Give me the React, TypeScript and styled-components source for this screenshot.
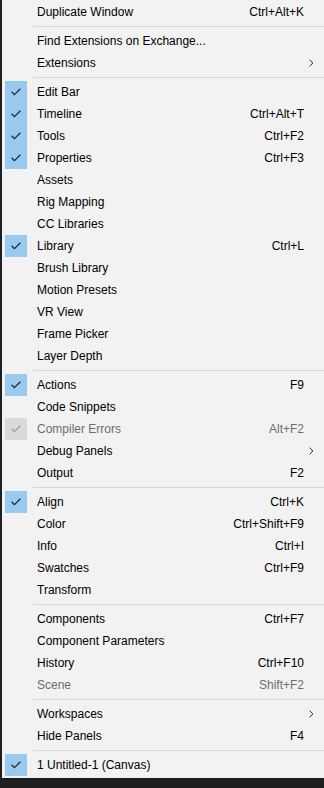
import React from 'react';
import styled, { createGlobalStyle } from 'styled-components';

const GlobalStyle = createGlobalStyle`
  html, body {
    margin: 0;
    padding: 0;
    background: #1f1f1f;
  }
  body {
    font-family: "Liberation Sans", Arial, sans-serif;
  }
`

const MenuWrapper = styled.div`
  margin-left: 2px;
  width: 322px;
  height: 778px;
  box-sizing: border-box;
  padding: 1px 0 3px 0;
  background: #f2f2f2;
  font-size: 12px;
  color: #000;
`

const MenuRow = styled.div<{ $disabled?: boolean }>`
  display: flex;
  align-items: center;
  height: 22px;
  padding-left: 3px;
  color: ${p => (p.$disabled ? '#6d6d6d' : '#000')};
`

const CheckCell = styled.div<{ $checked?: boolean; $disabled?: boolean }>`
  width: 22px;
  height: 22px;
  display: flex;
  align-items: center;
  justify-content: center;
  background: ${p => (!p.$checked ? 'transparent' : p.$disabled ? '#dadada' : '#99c9ef')};
`

const Label = styled.span`
  margin-left: 10px;
  white-space: nowrap;
`

const Shortcut = styled.span`
  margin-left: auto;
  white-space: nowrap;
`

const Trailing = styled.div`
  width: 20px;
  height: 22px;
  display: flex;
  align-items: center;
  padding-left: 5px;
  box-sizing: border-box;
`

const Separator = styled.div`
  height: 1px;
  margin: 3px 0 3px 31px;
  background: #d7d7d7;
`

type Entry =
  | { sep: true }
  | { label: string; shortcut?: string; checked?: boolean; disabled?: boolean; sub?: boolean };

const items: Entry[] = [
  { label: 'Duplicate Window', shortcut: 'Ctrl+Alt+K' },
  { sep: true },
  { label: 'Find Extensions on Exchange...' },
  { label: 'Extensions', sub: true },
  { sep: true },
  { label: 'Edit Bar', checked: true },
  { label: 'Timeline', shortcut: 'Ctrl+Alt+T', checked: true },
  { label: 'Tools', shortcut: 'Ctrl+F2', checked: true },
  { label: 'Properties', shortcut: 'Ctrl+F3', checked: true },
  { label: 'Assets' },
  { label: 'Rig Mapping' },
  { label: 'CC Libraries' },
  { label: 'Library', shortcut: 'Ctrl+L', checked: true },
  { label: 'Brush Library' },
  { label: 'Motion Presets' },
  { label: 'VR View' },
  { label: 'Frame Picker' },
  { label: 'Layer Depth' },
  { sep: true },
  { label: 'Actions', shortcut: 'F9', checked: true },
  { label: 'Code Snippets' },
  { label: 'Compiler Errors', shortcut: 'Alt+F2', checked: true, disabled: true },
  { label: 'Debug Panels', sub: true },
  { label: 'Output', shortcut: 'F2' },
  { sep: true },
  { label: 'Align', shortcut: 'Ctrl+K', checked: true },
  { label: 'Color', shortcut: 'Ctrl+Shift+F9' },
  { label: 'Info', shortcut: 'Ctrl+I' },
  { label: 'Swatches', shortcut: 'Ctrl+F9' },
  { label: 'Transform' },
  { sep: true },
  { label: 'Components', shortcut: 'Ctrl+F7' },
  { label: 'Component Parameters' },
  { label: 'History', shortcut: 'Ctrl+F10' },
  { label: 'Scene', shortcut: 'Shift+F2', disabled: true },
  { sep: true },
  { label: 'Workspaces', sub: true },
  { label: 'Hide Panels', shortcut: 'F4' },
  { sep: true },
  { label: '1 Untitled-1 (Canvas)', checked: true },
];

const CheckMark = ({ disabled }: { disabled?: boolean }) => (
  <svg width="10" height="8" viewBox="0 0 10 8">
    <polyline
      points="0.6,3.8 3.4,6.6 9.4,0.8"
      fill="none"
      stroke={disabled ? '#9a9a9a' : '#1e2a3a'}
      strokeWidth="1.3"
    />
  </svg>
);

const SubArrow = () => (
  <svg width="5" height="8" viewBox="0 0 5 8">
    <polyline points="0.6,0.6 3.8,4 0.6,7.4" fill="none" stroke="#333" strokeWidth="1" />
  </svg>
);

const App = () => {
  return (
    <>
      <GlobalStyle />
      <MenuWrapper>
        {items.map((item, i) =>
          'sep' in item ? (
            <Separator key={i} />
          ) : (
            <MenuRow key={i} $disabled={item.disabled}>
              <CheckCell $checked={item.checked} $disabled={item.disabled}>
                {item.checked ? <CheckMark disabled={item.disabled} /> : null}
              </CheckCell>
              <Label>{item.label}</Label>
              <Shortcut>{item.shortcut}</Shortcut>
              <Trailing>{item.sub ? <SubArrow /> : null}</Trailing>
            </MenuRow>
          )
        )}
      </MenuWrapper>
    </>
  );
};

export default App;
